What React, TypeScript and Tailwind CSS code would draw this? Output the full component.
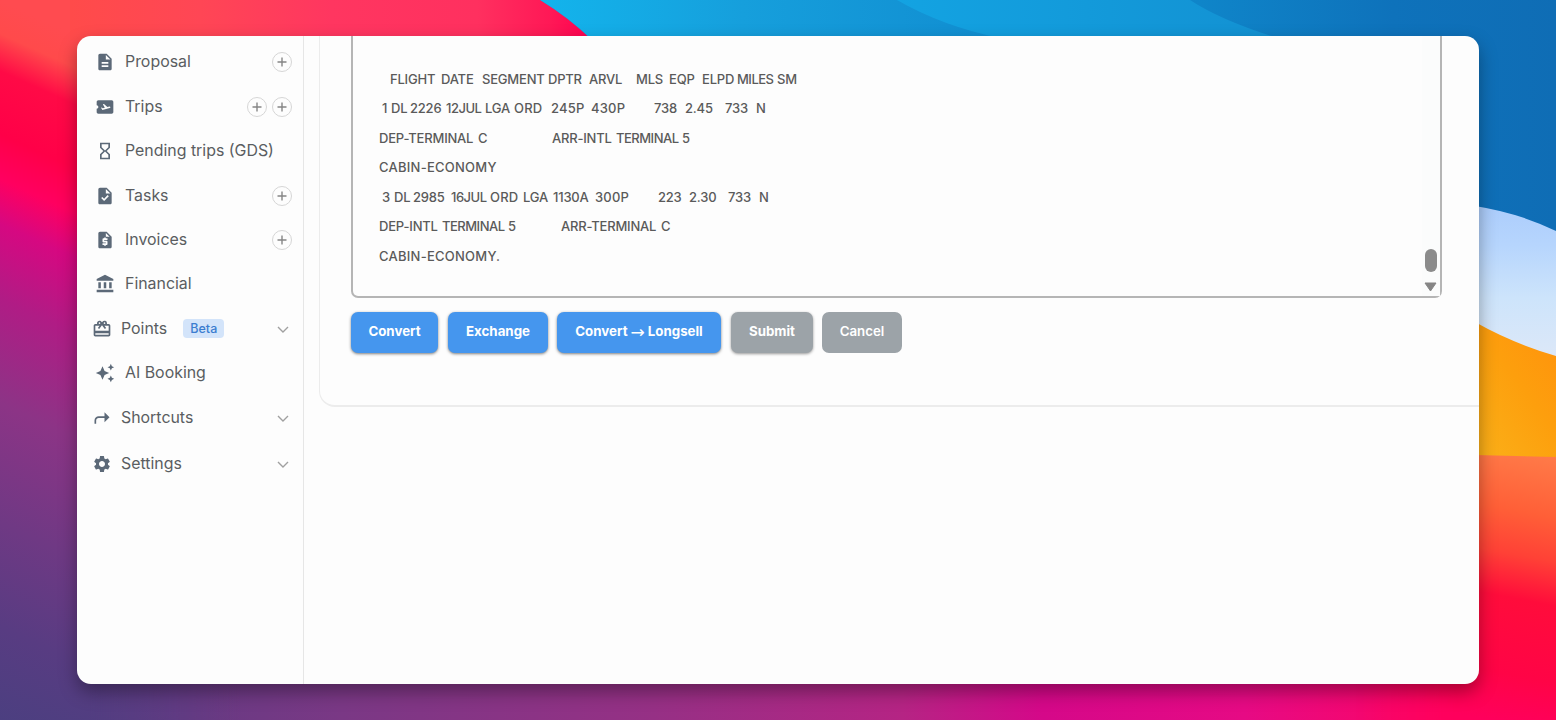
import React from 'react';
import type { IconType } from 'react-icons';
import {
  MdAccountBalance,
  MdAirplaneTicket,
  MdAutoAwesome,
  MdDescription,
  MdHourglassEmpty,
  MdOutlineCardGiftcard,
  MdRequestQuote,
  MdSettings,
  MdShortcut,
  MdTask,
} from 'react-icons/md';

type NavItem = {
  label: string;
  icon: IconType;
  adds?: number;
  badge?: string;
  group?: boolean;
};

const navItems: NavItem[] = [
  { label: 'Proposal', icon: MdDescription, adds: 1 },
  { label: 'Trips', icon: MdAirplaneTicket, adds: 2 },
  { label: 'Pending trips (GDS)', icon: MdHourglassEmpty },
  { label: 'Tasks', icon: MdTask, adds: 1 },
  { label: 'Invoices', icon: MdRequestQuote, adds: 1 },
  { label: 'Financial', icon: MdAccountBalance },
  { label: 'Points', icon: MdOutlineCardGiftcard, badge: 'Beta', group: true },
  { label: 'AI Booking', icon: MdAutoAwesome },
  { label: 'Shortcuts', icon: MdShortcut, group: true },
  { label: 'Settings', icon: MdSettings, group: true },
];

// [text, column width] pairs; the first entry may be an empty indent
const itinerary: [string, number][][] = [
  [['', 11], ['FLIGHT', 51], ['DATE', 41], ['SEGMENT', 66], ['DPTR', 41], ['ARVL', 47], ['MLS', 33], ['EQP', 33], ['ELPD', 35], ['MILES', 40], ['SM', 30]],
  [['', 3], ['1', 9], ['DL', 19], ['2226', 36], ['12JUL', 39], ['LGA', 29], ['ORD', 37], ['245P', 40], ['430P', 63], ['738', 31], ['2.45', 40], ['733', 31], ['N', 20]],
  [['DEP-TERMINAL', 99], ['C', 74], ['ARR-INTL', 64], ['TERMINAL', 66], ['5', 20]],
  [['CABIN-ECONOMY', 130]],
  [['', 3], ['3', 12], ['DL', 19], ['2985', 38], ['16JUL', 39], ['ORD', 33], ['LGA', 30], ['1130A', 42], ['300P', 63], ['223', 31], ['2.30', 39], ['733', 31], ['N', 20]],
  [['DEP-INTL', 63], ['TERMINAL', 66], ['5', 53], ['ARR-TERMINAL', 100], ['C', 20]],
  [['CABIN-ECONOMY.', 130]],
];

const trackingFor = (text: string) => {
  if (text.startsWith('CABIN')) return 'tracking-[0.25px]';
  if (/^(MILES|TERMINAL|12JUL|16JUL)$/.test(text)) return 'tracking-[-0.5px]';
  if (/^(ORD|245P|430P|300P)$/.test(text)) return 'tracking-[0.2px]';
  return 'tracking-[-0.2px]';
};

const Wallpaper: React.FC = () => (
  <svg className="absolute inset-0 h-full w-full" viewBox="0 0 1556 720" preserveAspectRatio="none">
    <defs>
      <linearGradient id="base" gradientUnits="userSpaceOnUse" x1="0" y1="720" x2="1556" y2="720">
        <stop offset="0" stopColor="#4b3f80" />
        <stop offset="0.07" stopColor="#5e3b82" />
        <stop offset="0.22" stopColor="#7a3885" />
        <stop offset="0.42" stopColor="#963085" />
        <stop offset="0.58" stopColor="#b52484" />
        <stop offset="0.67" stopColor="#d50889" />
        <stop offset="0.8" stopColor="#e60a84" />
        <stop offset="0.92" stopColor="#fb0565" />
        <stop offset="1" stopColor="#ff0058" />
      </linearGradient>
      <linearGradient id="left" gradientUnits="userSpaceOnUse" x1="0" y1="0" x2="-280" y2="620">
        <stop offset="0" stopColor="#ff4b50" />
        <stop offset="0.045" stopColor="#ff4a4b" />
        <stop offset="0.095" stopColor="#ff0a46" />
        <stop offset="0.18" stopColor="#ff0048" />
        <stop offset="0.24" stopColor="#ff0060" />
        <stop offset="0.3" stopColor="#d60881" />
        <stop offset="0.4" stopColor="#b01c85" />
        <stop offset="0.54" stopColor="#8c3486" />
        <stop offset="0.7" stopColor="#6f3984" />
        <stop offset="0.84" stopColor="#583c82" />
        <stop offset="0.97" stopColor="#4b3f80" />
      </linearGradient>
      <linearGradient id="fadeOut">
        <stop offset="0" stopColor="#fff" />
        <stop offset="0.37" stopColor="#fff" />
        <stop offset="1" stopColor="#000" />
      </linearGradient>
      <mask id="leftMask">
        <rect width="240" height="720" fill="url(#fadeOut)" />
      </mask>
      <linearGradient id="fadeIn">
        <stop offset="0" stopColor="#000" />
        <stop offset="0.52" stopColor="#fff" />
        <stop offset="1" stopColor="#fff" />
      </linearGradient>
      <mask id="coralMask">
        <rect x="1356" width="200" height="720" fill="url(#fadeIn)" />
      </mask>
      <linearGradient id="topRed">
        <stop offset="0" stopColor="#ff4b4a" />
        <stop offset="0.25" stopColor="#ff4655" />
        <stop offset="0.5" stopColor="#ff3660" />
        <stop offset="0.78" stopColor="#ff305f" />
        <stop offset="0.92" stopColor="#ff1856" />
        <stop offset="1" stopColor="#ff0050" />
      </linearGradient>
      <linearGradient id="sky" gradientUnits="userSpaceOnUse" x1="540" y1="0" x2="1556" y2="0">
        <stop offset="0" stopColor="#13b4ec" />
        <stop offset="0.2" stopColor="#169fdc" />
        <stop offset="0.4" stopColor="#1291d3" />
        <stop offset="0.65" stopColor="#0f85c9" />
        <stop offset="0.84" stopColor="#0e72bb" />
        <stop offset="1" stopColor="#0f6db5" />
      </linearGradient>
      <linearGradient id="skyBand">
        <stop offset="0" stopColor="#13a3e2" />
        <stop offset="1" stopColor="#1391d2" />
      </linearGradient>
      <linearGradient id="ice" x1="0" y1="0" x2="0" y2="1">
        <stop offset="0" stopColor="#accdfc" />
        <stop offset="0.25" stopColor="#b6d5fd" />
        <stop offset="0.6" stopColor="#cde4fb" />
        <stop offset="1" stopColor="#dde8f8" />
      </linearGradient>
      <linearGradient id="amber" x1="1" y1="0" x2="0.2" y2="1">
        <stop offset="0" stopColor="#ff920c" />
        <stop offset="0.5" stopColor="#fd9f0d" />
        <stop offset="1" stopColor="#fbae17" />
      </linearGradient>
      <linearGradient id="coral" gradientUnits="userSpaceOnUse" x1="1540" y1="455" x2="1490" y2="720">
        <stop offset="0" stopColor="#ff7a48" />
        <stop offset="0.22" stopColor="#ff5f37" />
        <stop offset="0.38" stopColor="#ff4136" />
        <stop offset="0.54" stopColor="#ff0c3b" />
        <stop offset="0.82" stopColor="#ff0446" />
        <stop offset="1" stopColor="#ff005c" />
      </linearGradient>
    </defs>
    <rect width="1556" height="720" fill="url(#base)" />
    <rect width="240" height="720" fill="url(#left)" mask="url(#leftMask)" />
    <path d="M70 0H540Q568 17 592 40H70Z" fill="url(#topRed)" />
    <path d="M540 0H1556V240H1470V40H592Q568 17 540 0Z" fill="url(#sky)" />
    <path d="M897 0H1190Q1222 21 1278 38H1000Q942 26 897 0Z" fill="url(#skyBand)" />
    <path d="M1475 206Q1519 213 1556 231V360H1475Z" fill="url(#ice)" />
    <path d="M1475 322Q1512 343 1556 356V460H1475Z" fill="url(#amber)" />
    <path d="M1356 455H1475L1556 457V720H1356Z" fill="url(#coral)" mask="url(#coralMask)" />
  </svg>
);

const AddButton: React.FC = () => (
  <button className="flex h-5 w-5 items-center justify-center rounded-full border border-[#d6d6d6]">
    <svg className="h-2.5 w-2.5" viewBox="0 0 10 10" fill="none" stroke="#858585" strokeWidth={1.4}>
      <path d="M5 0.5v9M0.5 5h9" />
    </svg>
  </button>
);

const Sidebar: React.FC = () => (
  <aside className="w-[227px] shrink-0 border-r border-[#e6e6e6] pt-[3px]">
    {navItems.map(({ label, icon: Icon, adds = 0, badge, group }) => (
      <div
        key={label}
        className={`flex h-[44.45px] items-center pr-[11px] text-[#5a5d61] last:mt-[2px] ${group ? 'pl-[15px]' : 'pl-[18px]'}`}
      >
        <Icon className="mt-0.5 h-5 w-5 shrink-0 text-[#5c6978]" />
        <span className={`mt-0.5 whitespace-nowrap text-[15.9px] leading-6 ${group ? 'ml-[9px]' : 'ml-2.5'}`}>
          {label}
        </span>
        {badge && (
          <span className="ml-4 mt-0.5 rounded bg-[#d3e4fa] px-[7px] text-[12.5px] font-medium leading-[19px] text-[#3b7dd0]">
            {badge}
          </span>
        )}
        <div className="ml-auto mt-0.5 flex gap-[5px]">
          {Array.from({ length: adds }, (_, i) => (
            <AddButton key={i} />
          ))}
          {group && (
            <svg className="mr-[3px] h-3 w-3" viewBox="0 0 12 12" fill="none" stroke="#a0a0a0" strokeWidth={1.4}>
              <path d="M1 4l5 5 5-5" />
            </svg>
          )}
        </div>
      </div>
    ))}
  </aside>
);

const buttonBase =
  'flex h-[41px] items-center justify-center rounded-[7px] pb-px text-[13.3px] text-white';

const App: React.FC = () => {
  return (
    <div className="relative h-[720px] w-[1556px] overflow-hidden font-['Inter',sans-serif]">
      <Wallpaper />
      <div className="relative h-full px-[77px] py-9">
        <div className="flex h-[648px] w-[1402px] overflow-hidden rounded-[14px] bg-[#fdfdfd] shadow-[0_8px_18px_rgba(0,0,0,0.35)]">
          <Sidebar />

          <main className="min-w-0 flex-1 pl-[15px]">
            <div className="h-[371px] rounded-bl-2xl border-b-2 border-l border-[#ececec] pl-[31px]">
              {/* GDS text area, scrolled to its end */}
              <div className="flex h-[262px] w-[1091px] justify-between rounded-b-[7px] border-x-2 border-b-2 border-[#b5b5b5]">
                <div className="pl-[26px] pt-[29px] text-[13px] font-medium text-[#5a5a5a]">
                  {itinerary.map((line, i) => (
                    <div key={i} className="flex h-[29.4px] items-center whitespace-nowrap last:mt-px">
                      {line.map(([text, width], j) => (
                        <span key={j} className={`shrink-0 ${trackingFor(text)}`} style={{ width }}>
                          {text}
                        </span>
                      ))}
                    </div>
                  ))}
                </div>
                <div className="flex w-[18px] flex-col items-center justify-end bg-[#fbfcfc] pb-1 pr-px">
                  <div className="h-[23px] w-3 rounded-full bg-[#8b8b8b]" />
                  <svg className="mt-2.5 h-[10px] w-[13px]" viewBox="0 0 13 10">
                    <path d="M1 1h11L6.5 9z" fill="#858585" stroke="#858585" strokeLinejoin="round" />
                  </svg>
                </div>
              </div>

              <div className="mt-[14px] flex">
                <button className={`${buttonBase} w-[87px] bg-[#4596ee] font-bold shadow-[0_1px_3px_rgba(0,0,0,0.5)]`}>
                  Convert
                </button>
                <button className={`${buttonBase} ml-2.5 w-[100px] bg-[#4596ee] font-bold shadow-[0_1px_3px_rgba(0,0,0,0.5)]`}>
                  Exchange
                </button>
                <button className={`${buttonBase} ml-[9px] w-[164px] bg-[#4596ee] font-bold shadow-[0_1px_3px_rgba(0,0,0,0.5)]`}>
                  <span>Convert</span>
                  <span className="mx-[3px] font-['DejaVu_Sans'] text-[17px] font-normal leading-4">→</span>
                  <span>Longsell</span>
                </button>
                <button className={`${buttonBase} ml-2.5 w-[82px] bg-[#9ca3a8] font-bold shadow-[0_1px_3px_rgba(0,0,0,0.4)]`}>
                  Submit
                </button>
                <button className={`${buttonBase} ml-[9px] w-20 bg-[#9ca3a8] font-semibold`}>Cancel</button>
              </div>
            </div>
          </main>
        </div>
      </div>
    </div>
  );
};

export default App;
